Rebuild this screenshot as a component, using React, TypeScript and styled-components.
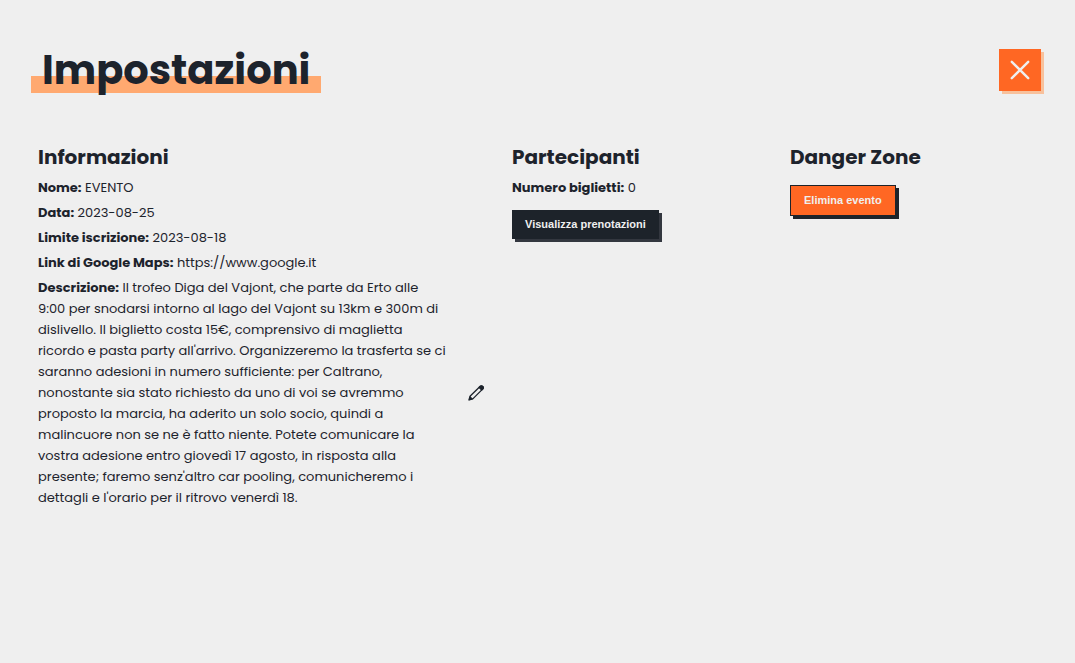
import React from 'react';
import styled, { createGlobalStyle } from 'styled-components';

const GlobalStyle = createGlobalStyle`
  *, *::before, *::after { box-sizing: border-box; }
  body {
    margin: 0;
    background: #efefef;
    color: #1d232c;
    font-family: Poppins, Inter, "Liberation Sans", sans-serif;
    font-size: 13px;
    line-height: 21px;
  }
`;

const Page = styled.main`
  padding: 38px 34px 32px 31px;
`;

const Header = styled.header`
  display: flex;
  align-items: center;
  justify-content: space-between;
`;

const Title = styled.h1`
  margin: 0;
  padding: 0 11px;
  font-size: 40px;
  line-height: 64px;
  font-weight: 700;
  background: linear-gradient(#ffa970, #ffa970) 0 38px / 100% 17px no-repeat;
`;

const CloseButton = styled.button`
  display: flex;
  align-items: center;
  justify-content: center;
  width: 42px;
  height: 42px;
  padding: 0;
  border: 0;
  background: #ff6723;
  color: #efefef;
  box-shadow: 3px 3px 0 #f8c19c;
  cursor: pointer;
`;

const Columns = styled.div`
  display: grid;
  grid-template-columns: 474fr 278fr 251fr;
  align-items: start;
  margin-top: 40px;
  padding-left: 7px;
`;

const Section = styled.section`
  min-width: 0;
`;

const SectionTitle = styled.h2`
  margin: 0 0 5px;
  font-size: 20px;
  line-height: 30px;
  font-weight: 700;
`;

const Field = styled.p`
  margin: 0 0 4px;
`;

const EditableField = styled.div`
  display: flex;
  align-items: center;
  gap: 10px;
`;

const Description = styled(Field)`
  width: 420px;
  margin: 0;
  white-space: pre-line;
`;

const IconButton = styled.button`
  display: flex;
  padding: 0;
  border: 0;
  background: none;
  color: #1d232c;
  cursor: pointer;
`;

const ActionButton = styled.button<{ $danger?: boolean }>`
  display: block;
  margin-top: ${({ $danger }) => ($danger ? 13 : 12)}px;
  padding: 7px 13px;
  border: ${({ $danger }) => ($danger ? '1px solid #1d232a' : '0')};
  background: ${({ $danger }) => ($danger ? '#ff6723' : '#1d232a')};
  color: #efefef;
  box-shadow: 3px 3px 0 ${({ $danger }) => ($danger ? '#1d232a' : '#33373f')};
  font-family: "Liberation Sans", Arial, sans-serif;
  font-size: 11px;
  line-height: 15px;
  font-weight: 700;
  cursor: pointer;
`;

const CloseIcon = () => (
  <svg width="20" height="20" viewBox="0 0 20 20" fill="none" stroke="currentColor" strokeWidth="2.4" strokeLinecap="round">
    <path d="M1.8 1.8 18.2 18.2M18.2 1.8 1.8 18.2" />
  </svg>
);

const PencilIcon = () => (
  <svg width="16" height="16" viewBox="0 0 16 16" fill="none" stroke="currentColor" strokeWidth="1.3" strokeLinejoin="round">
    <path d="M1 15 2 11.3 12 1.5Q13.3.3 14.7 1.5 15.8 2.8 14.6 4.1L4.8 13.9Z" />
    <path d="M11 2.4 13.7 5.1 14.9 3.8Q15.8 2.6 14.7 1.5 13.5.4 12.3 1.3Z" fill="currentColor" />
    <path d="M2 11.3 4.8 13.9 1 15Z" fill="currentColor" strokeWidth="0.5" />
  </svg>
);

const description = `Il trofeo Diga del Vajont, che parte da Erto alle
9:00 per snodarsi intorno al lago del Vajont su 13km e 300m di
dislivello. Il biglietto costa 15€, comprensivo di maglietta
ricordo e pasta party all'arrivo. Organizzeremo la trasferta se ci
saranno adesioni in numero sufficiente: per Caltrano,
nonostante sia stato richiesto da uno di voi se avremmo
proposto la marcia, ha aderito un solo socio, quindi a
malincuore non se ne è fatto niente. Potete comunicare la
vostra adesione entro giovedì 17 agosto, in risposta alla
presente; faremo senz'altro car pooling, comunicheremo i
dettagli e l'orario per il ritrovo venerdì 18.`;

export default function App() {
  return (
    <>
      <GlobalStyle />
      <Page>
        <Header>
          <Title>Impostazioni</Title>
          <CloseButton type="button" aria-label="Chiudi">
            <CloseIcon />
          </CloseButton>
        </Header>
        <Columns>
          <Section>
            <SectionTitle>Informazioni</SectionTitle>
            <Field><strong>Nome:</strong> EVENTO</Field>
            <Field><strong>Data:</strong> 2023-08-25</Field>
            <Field><strong>Limite iscrizione:</strong> 2023-08-18</Field>
            <Field><strong>Link di Google Maps:</strong> https://www.google.it</Field>
            <EditableField>
              <Description><strong>Descrizione:</strong> {description}</Description>
              <IconButton type="button" aria-label="Modifica">
                <PencilIcon />
              </IconButton>
            </EditableField>
          </Section>
          <Section>
            <SectionTitle>Partecipanti</SectionTitle>
            <Field><strong>Numero biglietti:</strong> 0</Field>
            <ActionButton type="button">Visualizza prenotazioni</ActionButton>
          </Section>
          <Section>
            <SectionTitle>Danger Zone</SectionTitle>
            <ActionButton type="button" $danger>Elimina evento</ActionButton>
          </Section>
        </Columns>
      </Page>
    </>
  );
}
